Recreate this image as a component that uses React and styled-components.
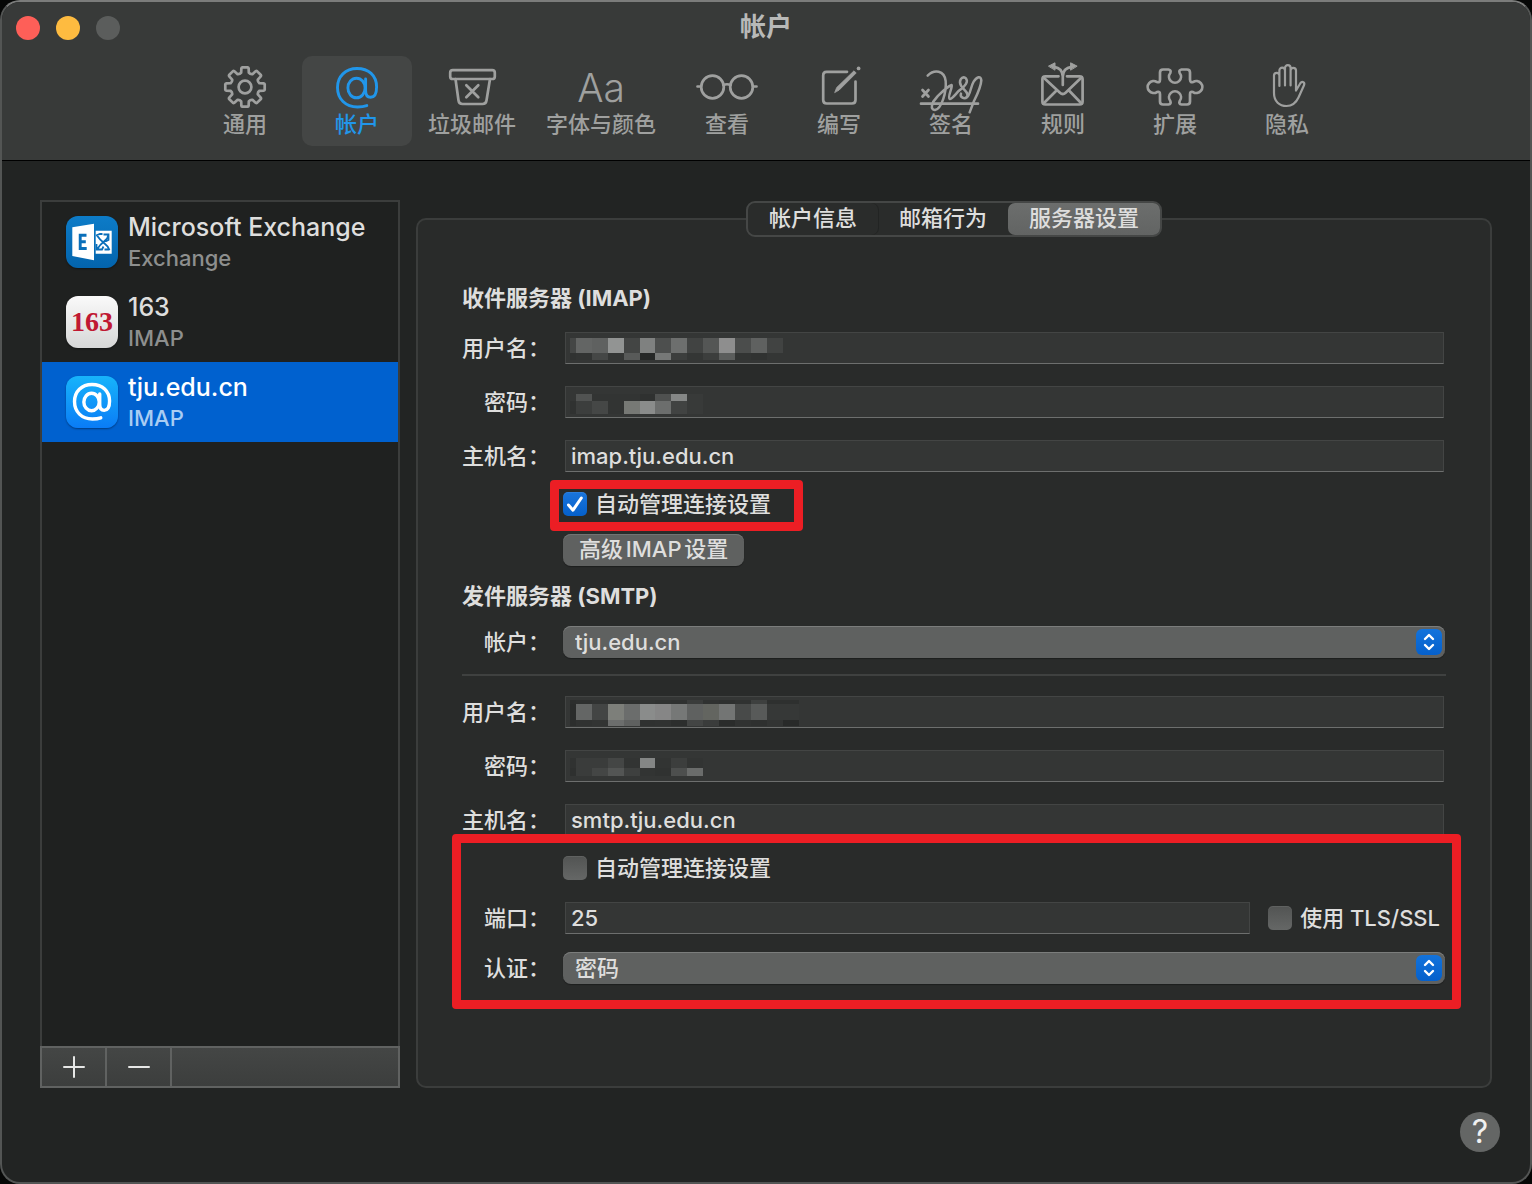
import React, { useId, useState } from "react";
import styled, { createGlobalStyle } from "styled-components";

const GlobalStyle = createGlobalStyle`
  *, *::before, *::after { box-sizing: border-box; }
  body {
    margin: 0;
    background: #060706;
    color: #dededd;
    font-family: Inter, "Noto Sans CJK SC", sans-serif;
    font-size: 22px;
    font-weight: 450;
    line-height: 32px;
    text-autospace: normal;
  }
  button, input, select { font: inherit; color: inherit; margin: 0; text-autospace: inherit; }
`;

/* ---------- window ---------- */

const Window = styled.div`
  display: flex;
  flex-direction: column;
  min-height: 100vh;
  border: 2px solid #535554;
  border-top-color: #7b7c7b;
  border-radius: 20px;
  background: #222423;
  overflow: hidden;
`;

const Header = styled.header`
  background: #383a39;
  border-bottom: 1px solid #000;
`;

const TitleBar = styled.div`
  display: grid;
  grid-template-columns: 1fr auto 1fr;
  align-items: center;
  height: 52px;
  padding: 0 14px;
`;

const Lights = styled.div`
  display: flex;
  gap: 16px;
`;

const Light = styled.button`
  width: 24px;
  height: 24px;
  padding: 0;
  border: 0;
  border-radius: 50%;
  background: ${(p) => p.$color};
`;

const Title = styled.h1`
  margin: 0;
  padding-bottom: 2px;
  font-size: 26px;
  line-height: 32px;
  font-weight: 600;
  color: #b8b9b8;
`;

const Toolbar = styled.nav`
  display: flex;
  justify-content: center;
  gap: 2px;
  padding: 2px 0 14px;
`;

const ToolButton = styled.button`
  display: flex;
  flex-direction: column;
  align-items: center;
  min-width: 110px;
  height: 90px;
  padding: 7px 14px 0;
  border: 0;
  border-radius: 10px;
  background: ${(p) => (p.$active ? "#444645" : "transparent")};
  color: ${(p) => (p.$active ? "#2196ea" : "#9fa09f")};
  line-height: 26px;
  white-space: nowrap;
`;

const ToolIcon = styled.svg`
  width: 64px;
  height: 48px;
  overflow: visible;
  fill: none;
  stroke: currentColor;
  stroke-width: 2.7;
  stroke-linecap: round;
  stroke-linejoin: round;
`;

const ToolGlyph = styled.span`
  height: 48px;
  font-size: 39px;
  line-height: 50px;
  font-weight: 350;
`;

/* ---------- body ---------- */

const Body = styled.main`
  flex: 1;
  display: flex;
  gap: 16px;
  padding: 39px 38px 0;
`;

const Sidebar = styled.aside`
  display: flex;
  flex-direction: column;
  width: 360px;
  flex: none;
`;

const AccountList = styled.ul`
  flex: 1;
  margin: 0;
  padding: 0;
  list-style: none;
  background: #1f2120;
  border: 2px solid #3b3d3c;
  border-bottom: 0;
`;

const AccountButton = styled.button`
  display: flex;
  align-items: center;
  gap: 10px;
  width: 100%;
  height: 80px;
  padding: 0 24px;
  border: 0;
  text-align: left;
  background: ${(p) => (p.$selected ? "#0061cf" : "transparent")};
`;

const AccountText = styled.span`
  display: flex;
  flex-direction: column;
  padding-top: 2px;
`;

const AccountName = styled.span`
  font-size: 25px;
  line-height: 30px;
  white-space: nowrap;
  color: ${(p) => (p.$selected ? "#fff" : "#dededd")};
`;

const AccountKind = styled.span`
  line-height: 32px;
  color: ${(p) => (p.$selected ? "#a9cdf3" : "#8d8f8e")};
`;

const Badge = styled.span`
  flex: none;
  display: grid;
  place-items: center;
  width: 52px;
  height: 52px;
  border-radius: 12px;
  background: ${(p) => p.$fill};
  box-shadow: 0 1px 2px rgba(0, 0, 0, 0.4);
`;

const Badge163 = styled.span`
  font-family: "Liberation Serif", serif;
  font-size: 28px;
  font-weight: 700;
  line-height: 52px;
  color: #c01832;
`;

const ListActions = styled.div`
  display: flex;
  height: 42px;
  border: 2px solid #606261;
  background: linear-gradient(#444645, #3c3e3d);
`;

const ListAction = styled.button`
  display: grid;
  place-items: center;
  width: 65px;
  padding: 0;
  border: 0;
  border-right: 2px solid #606261;
  background: none;
`;

const LineIcon = styled.svg`
  display: block;
  fill: none;
  stroke: ${(p) => p.$color || "#e6e7e6"};
  stroke-width: ${(p) => p.$weight || 2};
  stroke-linecap: round;
  stroke-linejoin: round;
`;

/* ---------- settings panel ---------- */

const Panel = styled.section`
  flex: 1;
  display: flex;
  flex-direction: column;
  min-width: 0;
  margin-top: 18px;
  padding: 0 44px 32px;
  border: 2px solid #3b3d3c;
  border-radius: 10px;
  background: #292b2a;
`;

const Segments = styled.div`
  align-self: center;
  display: flex;
  height: 36px;
  margin: -19px 0 45px;
  border: 2px solid #454746;
  border-radius: 9px;
  background: #2a2c2b;
`;

const Segment = styled.button`
  padding: 0 21px 2px;
  border: 0;
  border-radius: 7px;
  line-height: 30px;
  white-space: nowrap;
  background: ${(p) => (p.$active ? "linear-gradient(#6c6e6d, #626463)" : "transparent")};
  box-shadow: ${(p) => (p.$divided ? "1px 0 0 #222423" : "none")};
`;

const Heading = styled.h2`
  margin: 0;
  font-size: 22px;
  line-height: 32px;
  font-weight: 700;
`;

const Form = styled.form`
  display: flex;
  flex-direction: column;
`;

const Group = styled.div`
  position: relative;
  display: flex;
  flex-direction: column;
  gap: ${(p) => p.$gap}px;
  margin-top: ${(p) => p.$top}px;
`;

const Row = styled.div`
  display: grid;
  grid-template-columns: 88px minmax(0, 1fr);
  column-gap: 13px;
  align-items: center;
`;

const RowLabel = styled.label`
  text-align: right;
  white-space: nowrap;
`;

const RowContent = styled.div`
  grid-column: 2;
  display: flex;
  gap: 18px;
  padding: 0 2px;
`;

const ControlContent = styled.div`
  grid-column: 2;
  display: flex;
`;

const InputBox = styled.div`
  position: relative;
  flex: 1;
  min-width: 0;
`;

const Input = styled.input`
  display: block;
  width: 100%;
  height: 32px;
  padding: 0 5px;
  border: 1px solid #434544;
  border-bottom-color: #6d6f6e;
  border-radius: 0;
  outline: 0;
  background: #343635;
`;

const Mosaic = styled.svg`
  position: absolute;
  left: 0;
  top: 0;
  width: 240px;
  height: 32px;
  pointer-events: none;
`;

const SelectBox = styled.div`
  position: relative;
  flex: 1;
  margin-right: 1px;
`;

const Select = styled.select`
  display: block;
  width: 100%;
  height: 32px;
  padding: 0 40px 0 12px;
  appearance: none;
  border: 0;
  border-radius: 8px;
  outline: 0;
  background: #5f6160;
  box-shadow: inset 0 1px 0 #7b7d7c, 0 1px 1px rgba(0, 0, 0, 0.3);
`;

const Stepper = styled.span`
  position: absolute;
  top: 3px;
  right: 3px;
  display: grid;
  place-items: center;
  width: 26px;
  height: 26px;
  border-radius: 6px;
  background: linear-gradient(#1273dc, #0560cb);
  pointer-events: none;
`;

const CheckLabel = styled.label`
  position: relative;
  display: flex;
  align-items: center;
  gap: 8px;
  white-space: nowrap;
  margin-right: ${(p) => p.$end || 0}px;
`;

const CheckBox = styled.span`
  position: relative;
  width: 24px;
  height: 24px;
`;

const CheckInput = styled.input`
  display: block;
  width: 24px;
  height: 24px;
  appearance: none;
  border-radius: 5px;
  background: linear-gradient(#525453, #656766);
  box-shadow: inset 0 1px 0 rgba(255, 255, 255, 0.08);

  &:checked { background: linear-gradient(#1a75dc, #0560cb); }
  & + svg { display: none; }
  &:checked + svg { display: block; }
`;

const CheckMark = styled(LineIcon)`
  position: absolute;
  inset: 0;
  pointer-events: none;
`;

const PushButton = styled.button`
  height: 32px;
  padding: 0 16px 2px;
  border: 0;
  border-radius: 8px;
  line-height: 30px;
  white-space: nowrap;
  background: #5f6160;
  box-shadow: inset 0 1px 0 #727473, 0 1px 1px rgba(0, 0, 0, 0.3);
`;

const Divider = styled.hr`
  width: 100%;
  height: 2px;
  margin: 16px 0 0;
  border: 0;
  background: #3f4140;
`;

/* Red marker frame drawn over the controls it points out. */
const Marker = styled.span`
  position: absolute;
  inset: ${(p) => p.$inset};
  border: 9px solid #ec1e24;
  border-radius: 4px;
  pointer-events: none;
`;

const Footer = styled.footer`
  display: flex;
  justify-content: flex-end;
  padding: 24px 30px 30px;
`;

const HelpButton = styled.button`
  width: 40px;
  height: 40px;
  padding: 0;
  border: 0;
  border-radius: 50%;
  background: #646665;
  color: #f0f0f0;
  font-size: 32px;
  font-weight: 400;
  line-height: 40px;
`;

/* ---------- icons ---------- */

const gearPath = (() => {
  const pts = [];
  const at = (r, deg) => {
    const a = (deg * Math.PI) / 180;
    return `${(32 + r * Math.sin(a)).toFixed(2)} ${(24 - r * Math.cos(a)).toFixed(2)}`;
  };
  for (let i = 0; i < 8; i += 1) {
    const c = i * 45;
    pts.push(`${i ? "L" : "M"}${at(14.8, c - 15)} L${at(19, c - 11)} Q${at(19.9, c - 10)} ${at(19.9, c - 8)} L${at(19.9, c + 8)} Q${at(19.9, c + 10)} ${at(19, c + 11)} L${at(14.8, c + 15)} Q${at(13.6, c + 22.5)} ${at(14.8, c + 30)}`);
  }
  return `${pts.join(" ")}Z`;
})();

const AtShape = () => (
  <>
    <ellipse cx="31.5" cy="25" rx="8.6" ry="9.8" />
    <path d="M40.6 16V27.5c0 4.3 2 6.8 5 6.8 4 0 6-4.3 6-10.3C51.6 12.5 43.5 5.5 32 5.5 20.5 5.5 12.5 13.5 12.5 24.5 12.5 36 20.5 44 32.5 44c3.6 0 6.8-.5 9.3-1.4" />
  </>
);

const icons = {
  gear: (
    <>
      <path d={gearPath} />
      <circle cx="32" cy="24" r="6.4" />
    </>
  ),
  at: <g strokeWidth="2.9"><AtShape /></g>,
  bin: (
    <>
      <rect x="10.2" y="7.2" width="44.6" height="8.8" rx="2.6" />
      <path d="M15.5 16l3 21.5q.5 3.5 4 3.5h20q3.500 0 4-3.5L50 16M26.3 22.3l12 12M38.3 22.3l-12 12" />
    </>
  ),
  glasses: (
    <>
      <circle cx="17.5" cy="24" r="11.3" />
      <circle cx="46.5" cy="24" r="11.3" />
      <path d="M28.5 22q3.500-1.500 7 0M2.5 23.5H6M58 23.5h3.5" />
    </>
  ),
  compose: (
    <>
      <path d="M40 8.800H19.500Q16.200 8.800 16.200 12.200V37q0 3.500 3.500 3.500H45q3.500 0 3.500-3.500V18.500" />
      <path d="M27.800 29.300l1.900-4.800L47 7.800l2.200 2.200-16.900 16.900z" fill="currentColor" strokeWidth="0.8" />
      <circle cx="51.6" cy="5.4" r="1.9" fill="currentColor" stroke="none" />
    </>
  ),
  signature: (
    <>
      <path d="M3.5 27l6 6.5M9.5 27l-6 6.5M2 40.7H59" />
      <g transform="translate(-18 -8) scale(.3333)" strokeWidth="7.5">
        <path d="M80 62C100 42 130 46 134 78 137 110 122 162 102 165 86 165 92 142 108 126 124 110 136 96 152 90 156 95 138 128 146 132 156 132 166 112 178 104 192 94 204 80 194 69 182 62 172 78 180 92 188 106 206 114 198 126 190 134 176 126 180 116" />
        <path d="M198 126C208 122 208 96 218 80 228 64 240 62 241 76 240 96 228 120 219 138L206 172" />
      </g>
    </>
  ),
  rules: (
    <>
      <path d="M27.5 13.3H14.4q-3 0-3 3V38.5q0 3 3 3H48.600q3 0 3-3V16.300q0-3-3-3H36" />
      <path d="M12.5 14.5L29 29.700q2.800 2.600 5.600 0L50.500 14.500M12.500 40.500L25.500 27.500M50.500 40.500L38 27.500" />
      <path d="M31.8 22V13.500Q31.500 5 23 3.800M31.800 13.500Q32 5 40.500 3.800" />
      <path d="M17.8 3l6.200-3.200v7zM45.800 3l-6.200-3.200v7z" fill="currentColor" strokeWidth="1" />
    </>
  ),
  puzzle: (
    <path d="M20 6.500H25.500Q28.500 7 27.300 10A6 6 0 1 0 36.700 10Q35.500 7 38.500 6.500H44Q47 6.500 47 9.500V16.500Q47.300 20 50 19A6 6 0 1 1 50 29Q47 28 47 31.500V38.500Q47 41.500 44 41.500H38.500Q35.500 41 36.700 38A6 6 0 1 0 27.300 38Q28.500 41 25.500 41.500H20Q17 41.500 17 38.500V31.500Q17 28 14 29A6 6 0 1 1 14 19Q17 20 17 16.500V9.500Q17 6.500 20 6.500Z" />
  ),
  hand: (
    <path
      strokeWidth="2.2"
      d="M24.4 23V12.5a2.7 2.7 0 0 0-5.4 0V30C19 38.5 24.5 43 31.5 43 37.5 43 41 39.8 43.5 34.5L49 22.2C50.2 19.4 47.2 17.7 45.5 20L41 27.5V7.5a2.7 2.7 0 0 0-5.400 0V22.500V5a2.800 2.800 0 0 0-5.600 0V22.500V7.500a2.800 2.800 0 0 0-5.600 0V13"
    />
  ),
};

const tools = [
  ["通用", "gear"],
  ["帐户", "at"],
  ["垃圾邮件", "bin"],
  ["字体与颜色", null],
  ["查看", "glasses"],
  ["编写", "compose"],
  ["签名", "signature"],
  ["规则", "rules"],
  ["扩展", "puzzle"],
  ["隐私", "hand"],
];

const ExchangeBadge = () => (
  <Badge $fill="linear-gradient(#0d7cc8, #0364ad)">
    <svg width="52" height="52" viewBox="0 0 52 52" fill="none">
      <path d="M6.300 11.300L28 7.700V44.300L6.300 40z" fill="#fff" />
      <path d="M20.500 19.300h-6.300V32.500h6.500M14.200 25.800h5.600" stroke="#0a6fba" strokeWidth="2.9" />
      <path d="M29.700 14.700H45.700V37.700H29.700z" fill="#fff" />
      <path
        d="M30 19.500L34 18h2.500M31 19.500Q34 24 38 27T43.500 34M31 33.500Q34 28.500 38 25.500T42.500 18.500M37.500 18.500h5V24L39.500 25.500M30.500 28v5.500h5.500l1.500-3M38.500 33.500h5"
        stroke="#0a6fba"
        strokeWidth="1.8"
      />
    </svg>
  </Badge>
);

const NeteaseBadge = () => (
  <Badge $fill="linear-gradient(#fafafa, #d6d7d7)">
    <Badge163>163</Badge163>
  </Badge>
);

const AtBadge = () => (
  <Badge $fill="linear-gradient(#17b4fb, #0a7cf6)">
    <LineIcon width="52" height="52" viewBox="3 -3 58 56" $color="#fff" $weight={3.8}>
      <AtShape />
    </LineIcon>
  </Badge>
);

const accounts = [
  { name: "Microsoft Exchange", kind: "Exchange", Icon: ExchangeBadge },
  { name: "163", kind: "IMAP", Icon: NeteaseBadge },
  { name: "tju.edu.cn", kind: "IMAP", Icon: AtBadge },
];

/* ---------- redacted values ---------- */

const columns = [5, 11, 27, 43, 59, 75, 90, 106, 122, 138, 154, 170, 186, 202, 218, 234];

const mosaics = {
  imapUser: [
    [6, 21, "444645 636564 5f6160 929493 434544 7f8180 4d4f4e 6d6f6e 414342 545655 8e8e8e 4b4d4c 5f6160 414342"],
    [21, 28, "303231 323433 454746 343635 585a59 262827 767877 3c3e3d 343635 3c3e3d 5b5d5c 323433 303231"],
  ],
  imapPass: [
    [8, 15, "343635 515352 323433 323433 323433 2f3130 4f5150 858786 383a39"],
    [15, 28, "303231 3c3e3d 454746 323433 777975 8a8c8b 6c6e6d 414342 383a39"],
  ],
  smtpUser: [
    [4, 8, "2c2e2d 2e302f 303231 2f3130 2e302f 323433 303231 2f3130 3a3c3b 303231 2e302f 303231 3e403f 2e302f 2e302f"],
    [8, 24, "2a2c2b 646665 434544 7d7f7a 6b6d6c 8a8c8b 868686 767877 5f6160 636560 737574 484a49 585a59 363837 363837"],
    [24, 30, "2c2e2d 303231 323433 6c6e6d 5f6160 2f3130 303231 2c2e2d 434544 3a3c3b 2a2c2b 303231 2e302f 323433 282a29"],
  ],
  smtpPass: [
    [8, 18, "303231 3a3c3b 3a3c3b 444645 323433 848685 323433 3c3e3d 323433"],
    [18, 26, "2e302f 3a3c3b 444645 535554 3e403f 323433 303231 4d4f4e 6a6c6b"],
  ],
};

const Redaction = ({ name }) => (
  <Mosaic viewBox="0 0 240 32" shapeRendering="crispEdges" aria-hidden="true">
    {mosaics[name].map(([top, bottom, colors]) =>
      colors.split(" ").map((c, i) => (
        <rect
          key={`${top}-${columns[i]}`}
          x={columns[i]}
          y={top}
          width={columns[i + 1] - columns[i]}
          height={bottom - top}
          fill={`#${c}`}
        />
      ))
    )}
  </Mosaic>
);

/* ---------- form parts ---------- */

const TextRow = ({ label, value = "", type = "text", redacted, children }) => {
  const id = useId();
  return (
    <Row>
      <RowLabel htmlFor={id}>{label}</RowLabel>
      <RowContent>
        <InputBox>
          <Input id={id} type={type} defaultValue={value} />
          {redacted && <Redaction name={redacted} />}
        </InputBox>
        {children}
      </RowContent>
    </Row>
  );
};

const SelectRow = ({ label, value }) => {
  const id = useId();
  return (
    <Row>
      <RowLabel htmlFor={id}>{label}</RowLabel>
      <ControlContent>
        <SelectBox>
          <Select id={id} defaultValue={value}>
            <option>{value}</option>
          </Select>
          <Stepper>
            <LineIcon width="14" height="18" viewBox="0 0 14 18" $color="#fff" $weight={2.4}>
              <path d="M3 6l4-4 4 4M3 12l4 4 4-4" />
            </LineIcon>
          </Stepper>
        </SelectBox>
      </ControlContent>
    </Row>
  );
};

const Check = ({ label, checked, end, children }) => (
  <CheckLabel $end={end}>
    <CheckBox>
      <CheckInput type="checkbox" defaultChecked={checked} />
      <CheckMark width="24" height="24" viewBox="0 0 24 24" $color="#fff" $weight={3}>
        <path d="M5.500 13l4.500 5.200L18.300 6" />
      </CheckMark>
    </CheckBox>
    {label}
    {children}
  </CheckLabel>
);

export default function App() {
  const [tool, setTool] = useState("帐户");
  const [account, setAccount] = useState("tju.edu.cn");
  const [tab, setTab] = useState("服务器设置");

  return (
    <>
      <GlobalStyle />
      <Window>
        <Header>
          <TitleBar>
            <Lights>
              <Light type="button" aria-label="关闭" $color="#fe5f58" />
              <Light type="button" aria-label="最小化" $color="#febb40" />
              <Light type="button" aria-label="缩放" $color="#5b5d5c" />
            </Lights>
            <Title>帐户</Title>
          </TitleBar>
          <Toolbar>
            {tools.map(([label, icon]) => (
              <ToolButton key={label} type="button" $active={tool === label} onClick={() => setTool(label)}>
                {icon ? (
                  <ToolIcon viewBox="0 0 64 48" aria-hidden="true">{icons[icon]}</ToolIcon>
                ) : (
                  <ToolGlyph>Aa</ToolGlyph>
                )}
                {label}
              </ToolButton>
            ))}
          </Toolbar>
        </Header>

        <Body>
          <Sidebar>
            <AccountList>
              {accounts.map(({ name, kind, Icon }) => (
                <li key={name}>
                  <AccountButton type="button" $selected={account === name} onClick={() => setAccount(name)}>
                    <Icon />
                    <AccountText>
                      <AccountName $selected={account === name}>{name}</AccountName>
                      <AccountKind $selected={account === name}>{kind}</AccountKind>
                    </AccountText>
                  </AccountButton>
                </li>
              ))}
            </AccountList>
            <ListActions>
              <ListAction type="button" aria-label="添加帐户">
                <LineIcon width="22" height="22" viewBox="0 0 22 22"><path d="M1 11h20M11 1v20" /></LineIcon>
              </ListAction>
              <ListAction type="button" aria-label="移除帐户">
                <LineIcon width="22" height="22" viewBox="0 0 22 22"><path d="M1 11h20" /></LineIcon>
              </ListAction>
            </ListActions>
          </Sidebar>

          <Panel>
            <Segments>
              {["帐户信息", "邮箱行为", "服务器设置"].map((name, i) => (
                <Segment key={name} type="button" $active={tab === name} $divided={i === 0} onClick={() => setTab(name)}>
                  {name}
                </Segment>
              ))}
            </Segments>

            <Form onSubmit={(e) => e.preventDefault()}>
              <Heading>收件服务器 (IMAP)</Heading>
              <Group $top={18} $gap={22}>
                <TextRow label="用户名：" redacted="imapUser" />
                <TextRow label="密码：" type="password" redacted="imapPass" />
                <TextRow label="主机名：" value="imap.tju.edu.cn" />
              </Group>
              <Group $top={16} $gap={14}>
                <Row>
                  <ControlContent>
                    <Check label="自动管理连接设置" checked>
                      <Marker $inset="-8px -32px -11px -13px" />
                    </Check>
                  </ControlContent>
                </Row>
                <Row>
                  <ControlContent>
                    <PushButton type="button">高级IMAP设置</PushButton>
                  </ControlContent>
                </Row>
                <Heading>发件服务器 (SMTP)</Heading>
                <SelectRow label="帐户：" value="tju.edu.cn" />
              </Group>
              <Divider />
              <Group $top={20} $gap={22}>
                <TextRow label="用户名：" redacted="smtpUser" />
                <TextRow label="密码：" type="password" redacted="smtpPass" />
                <TextRow label="主机名：" value="smtp.tju.edu.cn" />
              </Group>
              <Group $top={16} $gap={18}>
                <Row>
                  <ControlContent>
                    <Check label="自动管理连接设置" />
                  </ControlContent>
                </Row>
                <TextRow label="端口：" value="25">
                  <Check label="使用 TLS/SSL" end={4} />
                </TextRow>
                <SelectRow label="认证：" value="密码" />
                <Marker $inset="-18px -15px -25px -10px" />
              </Group>
            </Form>
          </Panel>
        </Body>

        <Footer>
          <HelpButton type="button" aria-label="帮助">?</HelpButton>
        </Footer>
      </Window>
    </>
  );
}
